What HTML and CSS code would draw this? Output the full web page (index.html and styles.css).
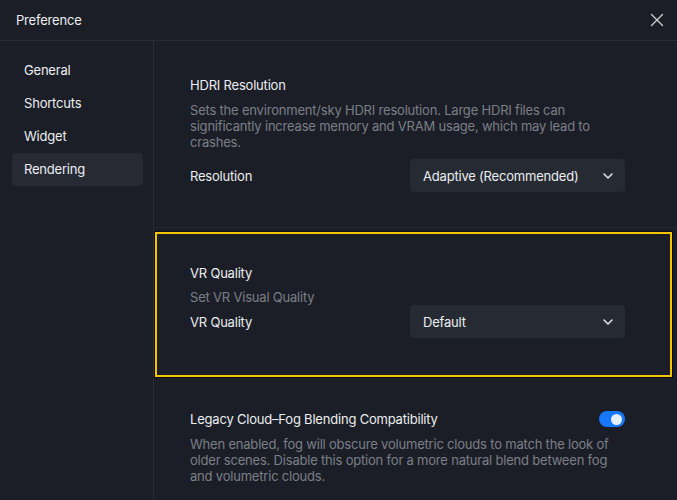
FILE: index.html
```html
<!DOCTYPE html>
<html lang="en">
<head>
    <meta charset="UTF-8">
    <meta name="viewport" content="width=device-width, initial-scale=1.0">
    <title>Preference</title>
    <link rel="stylesheet" href="styles.css">
</head>
<body>
    <div class="dialog">
        <div class="dialog-header">
            <span class="dialog-title">Preference</span>
            <button class="close-btn" aria-label="Close">
                <svg width="14" height="14" viewBox="0 0 14 14"><path d="M1.5 1.5L12.5 12.5M12.5 1.5L1.5 12.5" stroke="#c9ccd3" stroke-width="1.4" fill="none" stroke-linecap="round"/></svg>
            </button>
        </div>
        <div class="dialog-body">
            <ul class="sidebar">
                <li class="nav-item">General</li>
                <li class="nav-item">Shortcuts</li>
                <li class="nav-item">Widget</li>
                <li class="nav-item active">Rendering</li>
            </ul>
            <div class="content">
                <!-- HDRI -->
                <div class="section section-first">
                    <div class="section-title">HDRI Resolution</div>
                    <div class="section-desc">Sets the environment/sky HDRI resolution. Large HDRI files can significantly increase memory and VRAM usage, which may lead to crashes.</div>
                    <div class="setting-row row-spaced">
                        <span class="setting-label">Resolution</span>
                        <div class="select">
                            <span>Adaptive (Recommended)</span>
                            <svg width="10" height="6" viewBox="0 0 10 6"><path d="M1 1L5 5L9 1" stroke="#e6e7ea" stroke-width="1.5" fill="none" stroke-linecap="round" stroke-linejoin="round"/></svg>
                        </div>
                    </div>
                </div>

                <!-- VR -->
                <div class="section section-marked">
                    <div class="section-title">VR Quality</div>
                    <div class="section-desc">Set VR Visual Quality</div>
                    <div class="setting-row">
                        <span class="setting-label">VR Quality</span>
                        <div class="select">
                            <span>Default</span>
                            <svg width="10" height="6" viewBox="0 0 10 6"><path d="M1 1L5 5L9 1" stroke="#e6e7ea" stroke-width="1.5" fill="none" stroke-linecap="round" stroke-linejoin="round"/></svg>
                        </div>
                    </div>
                </div>

                <!-- Fog -->
                <div class="section section-last">
                    <div class="title-row">
                        <span class="section-title">Legacy Cloud–Fog Blending Compatibility</span>
                        <span class="toggle on"><span class="knob"></span></span>
                    </div>
                    <div class="section-desc">When enabled, fog will obscure volumetric clouds to match the look of older scenes. Disable this option for a more natural blend between fog and volumetric clouds.</div>
                </div>
            </div>
        </div>
    </div>
</body>
</html>
```

FILE: styles.css
```css
body {
    margin: 0;
    padding: 0;
    background-color: #1b1e26;
    font-family: Inter, "Noto Sans", sans-serif;
    font-size: 13px;
    letter-spacing: -0.2px;
    color: #eceef1;
    overflow: hidden;
}
.dialog {
    width: 677px;
    height: 500px;
    background-color: #1b1e26;
}
.dialog-header {
    height: 40px;
    border-bottom: 1px solid #2a2d36;
    display: flex;
    align-items: center;
    justify-content: space-between;
    padding: 0 13px 0 16px;
}
.dialog-title {
    font-size: 13px;
    color: #eceef1;
}
.close-btn {
    background: none;
    border: none;
    padding: 0;
    width: 14px;
    height: 14px;
    display: flex;
    cursor: pointer;
}
.dialog-body {
    display: flex;
    height: 459px;
}
.sidebar {
    list-style: none;
    margin: 0;
    width: 141px;
    padding: 13px 0 0 12px;
    border-right: 1px solid #2a2d36;
}
.nav-item {
    width: 131px;
    height: 33px;
    line-height: 33px;
    padding-left: 12px;
    box-sizing: border-box;
    border-radius: 4px;
    color: #eceef1;
    cursor: pointer;
}
.nav-item.active {
    background-color: #272a33;
}
.content {
    flex: 1;
}
.section {
    padding: 0 52px 0 36px;
}
.section-first {
    padding-top: 35px;
    padding-bottom: 35px;
    border-bottom: 1px solid #252832;
}
.section-marked {
    margin: 4px 5px 0 1px;
    padding: 30px 45px 37px 33px;
    border: 2px solid #f5c400;
    box-shadow: 0 0 0 1px #0d0f14;
}
.section-last {
    padding-top: 33px;
}
.section-title {
    display: block;
    line-height: 18px;
    color: #eceef1;
}
.section-desc {
    margin-top: 8px;
    line-height: 16px;
    color: #7b7f88;
}
.setting-row {
    display: flex;
    align-items: center;
    justify-content: space-between;
}
.row-spaced {
    margin-top: 9px;
}
.section-marked .section-desc {
    margin-top: 7px;
}
.setting-label {
    color: #eceef1;
}
.select {
    width: 215px;
    height: 33px;
    box-sizing: border-box;
    padding: 0 12px 0 13px;
    background-color: #262a33;
    border-radius: 4px;
    display: flex;
    align-items: center;
    justify-content: space-between;
    color: #eceef1;
}
.title-row {
    display: flex;
    align-items: center;
    justify-content: space-between;
}
.toggle {
    width: 26px;
    height: 16px;
    border-radius: 8px;
    background-color: #1677ff;
    display: flex;
    align-items: center;
    justify-content: flex-end;
    padding: 0 3px;
    box-sizing: border-box;
}
.knob {
    width: 11px;
    height: 11px;
    border-radius: 50%;
    background-color: #e6efff;
}
```
